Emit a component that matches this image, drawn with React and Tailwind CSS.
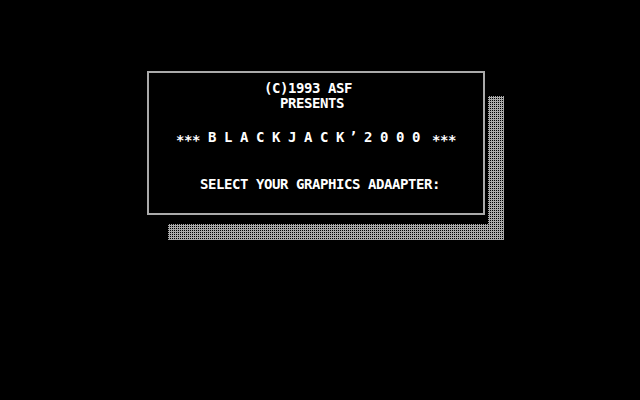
import React from "react";

// Dithered "shadow" fill, like the old EGA 50% grey pattern
const dither =
  "bg-[#aaaaaa] bg-[conic-gradient(from_270deg_at_1px_1px,#000_90deg,#aaaaaa_0)] bg-[length:2px_2px]";

const Line = ({ className = "", children }) => (
  <div className={`h-[14px] leading-[14px] whitespace-pre ${className}`}>{children}</div>
);

const App = () => {
  return (
    <div className="w-[640px] h-[400px] bg-black overflow-hidden font-['DejaVu_Sans_Mono',monospace] font-bold text-[14px] tracking-[-0.43px] text-white">
      <div className="pt-[71px] pl-[147px]">
        <div className="relative w-[357px] h-[169px]">
          {/* drop shadow: right bar and bottom bar */}
          <div className={`absolute left-[341px] top-[25px] w-[16px] h-[144px] ${dither}`} />
          <div className={`absolute left-[21px] top-[153px] w-[336px] h-[16px] ${dither}`} />

          <div className="relative w-[338px] h-[144px] border-2 border-[#aaaaaa] bg-black pt-[8px]">
            <Line className="pl-[115px]">(C)1993 ASF</Line>
            <Line className="mt-[1px] pl-[131px]">PRESENTS</Line>
            <div className="mt-[20px] pl-[27px] flex h-[14px] leading-[14px] whitespace-pre">
              <span className="translate-y-[3px]">***</span>
              <span>{" B L A C K J A C K"}</span>
              <span className="ml-[5px]">’</span>
              <span className="ml-[7px]">2 0 0 0</span>
              <span className="ml-[12px] translate-y-[3px]">***</span>
            </div>
            <Line className="mt-[33px] pl-[51px]">SELECT YOUR GRAPHICS ADAAPTER:</Line>
          </div>
        </div>
      </div>
    </div>
  );
};

export default App;
